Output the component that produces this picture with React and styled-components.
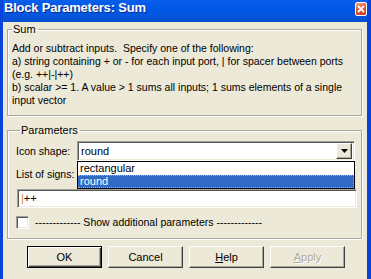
import React from "react";
import styled, { createGlobalStyle } from "styled-components";

const Global = createGlobalStyle`
  html, body { margin: 0; padding: 0; background: #ECE9D8; }
  body { font-family: Tahoma, "Liberation Sans", Arial, sans-serif; font-size: 10.5px; color: #000; }
  * { box-sizing: border-box; }
`;

const Win = styled.div`
  width: 371px;
  height: 279px;
  overflow: hidden;
  display: flex;
  flex-direction: column;
  background: #ECE9D8;
  border-left: 3px solid #0843DB;
  border-right: 4px solid #0843DB;
`;

const TitleBar = styled.div`
  height: 22px;
  margin: 0 -4px 0 -3px;
  padding: 1px 4px 0 4px;
  display: flex;
  align-items: flex-start;
  justify-content: space-between;
  background: linear-gradient(180deg, #0A5FEB 0%, #0058E6 40%, #0753DA 85%, #0A4AC9 100%);
`;

const Title = styled.div`
  color: #fff;
  font-family: "Liberation Sans", Arial, sans-serif;
  font-weight: bold;
  font-size: 13px;
  line-height: 14px;
  letter-spacing: -0.2px;
  text-shadow: 1px 1px 0 #0A2D8C;
`;

const CloseBtn = styled.div`
  width: 12px;
  height: 14px;
  margin-top: 1px;
  border: 1px solid #fff;
  border-radius: 2px;
  background: linear-gradient(160deg, #F4A58A 0%, #E05A2F 45%, #C7401A 100%);
  display: flex;
  align-items: center;
  justify-content: center;
`;

const Body = styled.div`
  flex: 1;
  display: flex;
  flex-direction: column;
  padding: 1px 5px 0 4px;
`;

const Group = styled.fieldset`
  margin: ${(p) => p.$mt || 0}px 0 0 0;
  padding: 0 ${(p) => p.$pr || 4}px ${(p) => p.$pb || 0}px ${(p) => p.$pl || 4}px;
  border: 1px solid #ACA899;
  box-shadow: inset 1px 1px 0 #fff, 1px 1px 0 #fff;
  min-width: 0;
`;

const Legend = styled.legend`
  padding: 0 2px 0 1px;
  margin-left: ${(p) => p.$ml || 0}px;
  font-size: 11px;
  line-height: 13px;
`;

const Desc = styled.div`
  margin-top: 6px;
  line-height: 13px;
  white-space: nowrap;
`;

const Row = styled.div`
  display: flex;
  align-items: center;
  margin-top: ${(p) => p.$mt || 0}px;
`;

const Label = styled.div`
  width: ${(p) => p.$w || "auto"};
  line-height: 13px;
  white-space: nowrap;
`;

const SelectWrap = styled.div`
  position: relative;
  flex: 1;
`;

const Sunken = styled.div`
  height: ${(p) => p.$h}px;
  background: #fff;
  border: 1px solid;
  border-color: #A0A0A0 #fff #fff #A0A0A0;
  box-shadow: inset 1px 1px 0 #555, inset -1px -1px 0 #ECE9D8;
  display: flex;
  align-items: center;
  padding: 0 2px 0 3px;
`;

const Value = styled.span`
  flex: 1;
  font-size: 11px;
  line-height: 13px;
`;

const DropBtn = styled.div`
  width: 16px;
  height: 16px;
  background: #ECE9D8;
  border: 1px solid;
  border-color: #fff #404040 #404040 #fff;
  box-shadow: inset -1px -1px 0 #ACA899;
  display: flex;
  align-items: center;
  justify-content: center;
`;

const Popup = styled.div`
  position: absolute;
  left: 0;
  top: 100%;
  width: 278px;
  background: #fff;
  border: 1px solid #000;
  z-index: 2;
`;

const Item = styled.div`
  height: 13px;
  line-height: 11px;
  padding-left: 2px;
  font-size: 11px;
  color: ${(p) => (p.$sel ? "#fff" : "#000")};
  background: ${(p) => (p.$sel ? "#316AC5" : "transparent")};
  border: 1px dotted ${(p) => (p.$sel ? "#E8A060" : "transparent")};
  border-left: none;
`;

const Field = styled(Sunken)`
  margin-top: ${(p) => p.$mt}px;
  margin-left: 1px;
  margin-right: -2px;
`;

const Caret = styled.span`
  color: #E08020;
`;

const Check = styled.div`
  width: 13px;
  height: 13px;
  background: #fff;
  border: 1px solid;
  border-color: #A0A0A0 #fff #fff #A0A0A0;
  box-shadow: inset 1px 1px 0 #555, inset -1px -1px 0 #ECE9D8;
  margin-right: 6px;
`;

const Buttons = styled.div`
  display: flex;
  gap: 6px;
  padding-left: 20px;
  margin-top: 7px;
`;

const Btn = styled.div`
  width: 75px;
  height: 22px;
  display: flex;
  align-items: center;
  justify-content: center;
  background: #ECE9D8;
  border: 1px solid;
  border-color: ${(p) => (p.$def ? "#000" : "#fff #404040 #404040 #fff")};
  box-shadow: ${(p) =>
    p.$def
      ? "inset 1px 1px 0 #fff, inset -1px -1px 0 #404040, inset -2px -2px 0 #ACA899"
      : "inset -1px -1px 0 #ACA899"};
  font-size: 11px;
  color: ${(p) => (p.$dis ? "#ACA899" : "#000")};
  text-shadow: ${(p) => (p.$dis ? "1px 1px 0 #fff" : "none")};
`;

const U = styled.span`
  text-decoration: underline;
`;

export default function App() {
  return (
    <>
      <Global />
      <Win>
        <TitleBar>
          <Title>Block Parameters: Sum</Title>
          <CloseBtn>
            <svg width="8" height="8" viewBox="0 0 8 8">
              <path d="M1 1 L7 7 M7 1 L1 7" stroke="#fff" strokeWidth="1.8" />
            </svg>
          </CloseBtn>
        </TitleBar>
        <Body>
          <Group $pb={8}>
            <Legend>Sum</Legend>
            <Desc>
              Add or subtract inputs.&nbsp; Specify one of the following:
              <br />
              a) string containing + or - for each input port, | for spacer between ports
              <br />
              (e.g. ++|-|++)
              <br />
              b) scalar &gt;= 1. A value &gt; 1 sums all inputs; 1 sums elements of a single
              <br />
              input vector
            </Desc>
          </Group>
          <Group $mt={8} $pl={8} $pr={6} $pb={9}>
            <Legend $ml={4}>Parameters</Legend>
            <Row $mt={4}>
              <Label $w="61px">Icon shape:</Label>
              <SelectWrap>
                <Sunken $h={20}>
                  <Value>round</Value>
                  <DropBtn>
                    <svg width="7" height="4" viewBox="0 0 7 4">
                      <path d="M0 0 H7 L3.5 4 Z" fill="#000" />
                    </svg>
                  </DropBtn>
                </Sunken>
                <Popup>
                  <Item>rectangular</Item>
                  <Item $sel>round</Item>
                </Popup>
              </SelectWrap>
            </Row>
            <Row $mt={7}>
              <Label>List of signs:</Label>
            </Row>
            <Field $h={19} $mt={8}>
              <Value>
                <Caret>|</Caret>++
              </Value>
            </Field>
            <Row $mt={8}>
              <Check />
              <Label>------------- Show additional parameters -------------</Label>
            </Row>
          </Group>
          <Buttons>
            <Btn $def>OK</Btn>
            <Btn>Cancel</Btn>
            <Btn>
              <span>
                <U>H</U>elp
              </span>
            </Btn>
            <Btn $dis>
              <span>
                <U>A</U>pply
              </span>
            </Btn>
          </Buttons>
        </Body>
      </Win>
    </>
  );
}
